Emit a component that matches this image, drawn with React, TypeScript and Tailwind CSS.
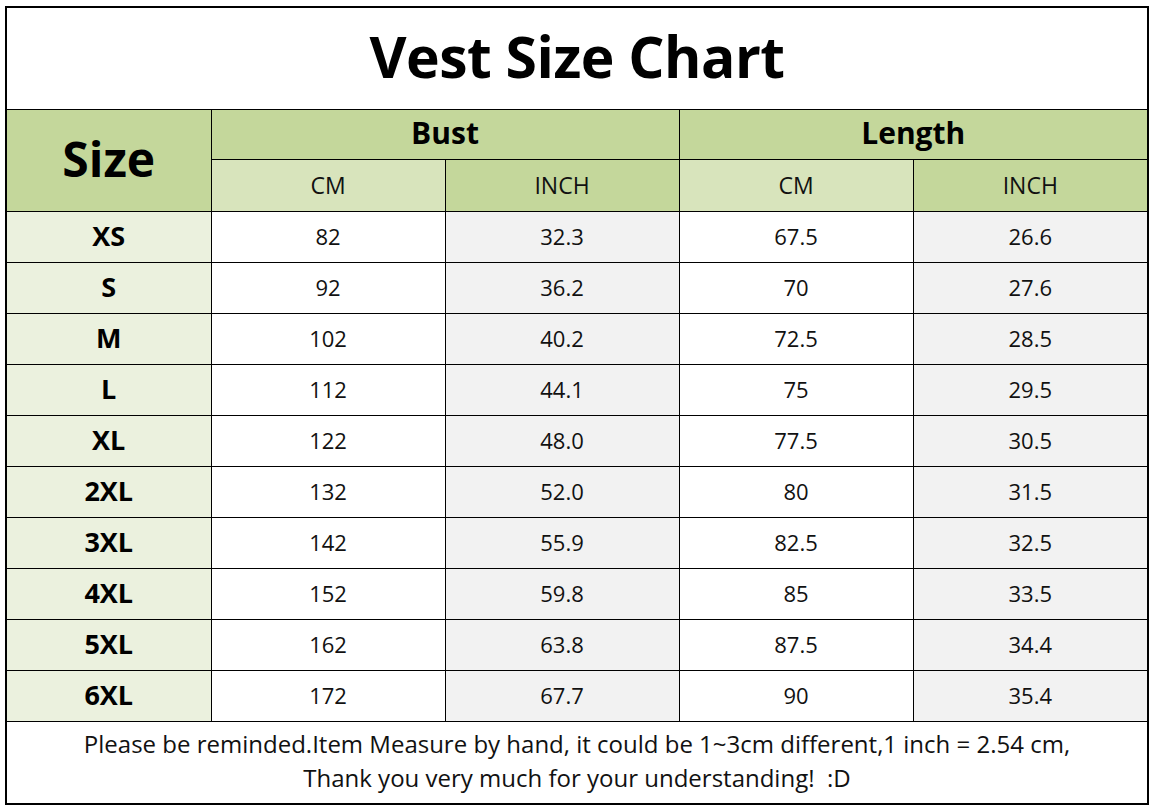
const rows = [
  ["XS", "82", "32.3", "67.5", "26.6"],
  ["S", "92", "36.2", "70", "27.6"],
  ["M", "102", "40.2", "72.5", "28.5"],
  ["L", "112", "44.1", "75", "29.5"],
  ["XL", "122", "48.0", "77.5", "30.5"],
  ["2XL", "132", "52.0", "80", "31.5"],
  ["3XL", "142", "55.9", "82.5", "32.5"],
  ["4XL", "152", "59.8", "85", "33.5"],
  ["5XL", "162", "63.8", "87.5", "34.4"],
  ["6XL", "172", "67.7", "90", "35.4"],
];

export default function App() {
  return (
    <div
      className="min-h-[810px] w-[1153px] bg-white pl-[5px] pt-[6px] text-[#111]"
      style={{ fontFamily: '"Open Sans", "Noto Sans", sans-serif' }}
    >
      <table className="w-[1142px] table-fixed border-collapse border-2 border-black">
        <colgroup>
          <col className="w-[205px]" />
          <col className="w-[234px]" />
          <col className="w-[234px]" />
          <col className="w-[234px]" />
          <col className="w-[235px]" />
        </colgroup>
        <tbody>
          {/* Title */}
          <tr className="h-[102px]">
            <td
              colSpan={5}
              className="border border-black bg-white pb-[4px] text-center text-[57px] leading-none font-bold tracking-[-0.5px] text-black"
            >
              Vest Size Chart
            </td>
          </tr>

          {/* Header */}
          <tr className="h-[50px]">
            <td
              rowSpan={2}
              className="border border-black bg-[#c4d79b] pb-[2px] text-center text-[48px] leading-none font-bold text-black"
            >
              Size
            </td>
            <td
              colSpan={2}
              className="border border-black bg-[#c4d79b] pb-[2px] text-center text-[30px] leading-none font-bold text-black"
            >
              Bust
            </td>
            <td
              colSpan={2}
              className="border border-black bg-[#c4d79b] pb-[2px] text-center text-[30px] leading-none font-bold text-black"
            >
              Length
            </td>
          </tr>
          <tr className="h-[52px] text-[23px]">
            <td className="border border-black bg-[#d8e4bc] text-center">CM</td>
            <td className="border border-black bg-[#c4d79b] text-center">INCH</td>
            <td className="border border-black bg-[#d8e4bc] text-center">CM</td>
            <td className="border border-black bg-[#c4d79b] text-center">INCH</td>
          </tr>

          {/* Data */}
          {rows.map((r) => (
            <tr key={r[0]} className="h-[51px] text-[22px]">
              <td className="border border-black bg-[#ebf1de] text-center text-[27px] font-bold text-black">
                {r[0]}
              </td>
              <td className="border border-black bg-white text-center">{r[1]}</td>
              <td className="border border-black bg-[#f2f2f2] text-center">{r[2]}</td>
              <td className="border border-black bg-white text-center">{r[3]}</td>
              <td className="border border-black bg-[#f2f2f2] text-center">{r[4]}</td>
            </tr>
          ))}

          {/* Footer */}
          <tr className="h-[83px]">
            <td
              colSpan={5}
              className="border border-black bg-white pb-[2px] text-center text-[24px] leading-[34px]"
            >
              Please be reminded.Item Measure by hand, it could be 1~3cm different,1 inch = 2.54 cm,
              <br />
              Thank you very much for your understanding!&nbsp; :D
            </td>
          </tr>
        </tbody>
      </table>
    </div>
  );
}
